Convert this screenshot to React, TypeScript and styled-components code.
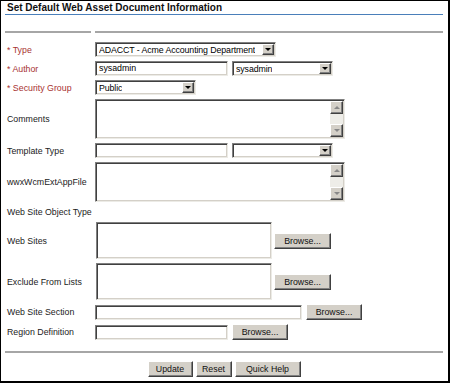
import React from "react";
import styled, { createGlobalStyle, css } from "styled-components";

const Global = createGlobalStyle`
  html, body { margin: 0; padding: 0; background: #fff; }
  body { font-family: "Liberation Sans", Arial, sans-serif; }
`;

const Frame = styled.div`
  box-sizing: border-box;
  width: 450px;
  height: 383px;
  border-top: 1px solid #000;
  border-left: 1px solid #000;
  border-right: 2px solid #000;
  border-bottom: 2px solid #000;
  padding: 0 5px 0 4px;
  display: flex;
  flex-direction: column;
  font-size: 8.8px;
  color: #000;
`;

const Title = styled.div`
  height: 13px;
  border-bottom: 1px solid #4a7fba;
  padding-left: 2px;
  font-weight: bold;
  font-size: 10px;
  line-height: 13px;
  color: #111;
`;

const HeadRule = styled.div`
  margin-top: 16px;
  display: grid;
  grid-template-columns: 86px 1fr;
  column-gap: 4px;
`;

const Rule = styled.div`
  height: 2px;
  background: #a6a6a6;
`;

const FormGrid = styled.div`
  margin-top: 9px;
  display: grid;
  grid-template-columns: 86px 1fr;
  column-gap: 4px;
  row-gap: 4px;
`;

const Label = styled.div<{ $req?: boolean }>`
  align-self: center;
  padding-left: 2px;
  white-space: nowrap;
  color: ${(p) => (p.$req ? "#a83232" : "#222")};
`;

const Cell = styled.div<{ $h?: number; $gap?: number }>`
  display: flex;
  align-items: center;
  gap: ${(p) => p.$gap ?? 4}px;
  min-height: ${(p) => p.$h ?? 12}px;
`;

const inset = css`
  box-sizing: border-box;
  background: #fff;
  border-top: 1px solid #808080;
  border-left: 1px solid #808080;
  border-right: 1px solid #ecebe6;
  border-bottom: 1px solid #ecebe6;
  box-shadow: inset 1px 1px 0 #404040, inset -1px -1px 0 #d4d0c8;
`;

const raised = css`
  box-sizing: border-box;
  background: #d4d0c8;
  border-top: 1px solid #fff;
  border-left: 1px solid #fff;
  border-right: 1px solid #404040;
  border-bottom: 1px solid #404040;
  box-shadow: inset -1px -1px 0 #808080;
`;

const TextBox = styled.div<{ $w: number; $ml?: number }>`
  ${inset};
  width: ${(p) => p.$w}px;
  height: 15px;
  margin-left: ${(p) => p.$ml ?? 0}px;
  padding: 0 3px;
  line-height: 13px;
  white-space: nowrap;
  overflow: hidden;
`;

const SelectBox = styled.div<{ $w: number }>`
  ${inset};
  width: ${(p) => p.$w}px;
  height: 15px;
  display: flex;
  align-items: center;
  justify-content: space-between;
  gap: 2px;
  padding: 0 1px 0 3px;
  white-space: nowrap;
`;

const SelectText = styled.span`
  overflow: hidden;
  letter-spacing: -0.1px;
`;

const ArrowBtn = styled.div`
  ${raised};
  width: 12px;
  height: 11px;
  display: flex;
  align-items: center;
  justify-content: center;
  flex-shrink: 0;
`;

const Tri = styled.div<{ $up?: boolean; $c?: string }>`
  width: 0;
  height: 0;
  border-left: 3px solid transparent;
  border-right: 3px solid transparent;
  ${(p) =>
    p.$up
      ? `border-bottom: 3px solid ${p.$c ?? "#000"};`
      : `border-top: 3px solid ${p.$c ?? "#000"};`}
`;

const Area = styled.div<{ $w: number; $h: number; $ml?: number }>`
  ${inset};
  width: ${(p) => p.$w}px;
  height: ${(p) => p.$h}px;
  margin-left: ${(p) => p.$ml ?? 0}px;
  display: flex;
  justify-content: flex-end;
  padding: 1px;
`;

const Scroll = styled.div`
  width: 13px;
  display: flex;
  flex-direction: column;
  background: #eeede8;
`;

const ScrollBtn = styled.div`
  ${raised};
  height: 13px;
  display: flex;
  align-items: center;
  justify-content: center;
`;

const Track = styled.div`
  flex: 1;
`;

const Button = styled.div<{ $w: number }>`
  ${raised};
  width: ${(p) => p.$w}px;
  height: 16px;
  display: flex;
  align-items: center;
  justify-content: center;
  font-size: 8.8px;
  color: #111;
`;

const Footer = styled.div`
  margin-top: 11px;
  display: flex;
  flex-direction: column;
`;

const ButtonBar = styled.div`
  margin-top: 8px;
  display: flex;
  justify-content: center;
  gap: 3px;
`;

const Select = ({ w, value }: { w: number; value?: string }) => (
  <SelectBox $w={w}>
    <SelectText>{value ?? ""}</SelectText>
    <ArrowBtn>
      <Tri />
    </ArrowBtn>
  </SelectBox>
);

const TextArea = ({ w, h }: { w: number; h: number }) => (
  <Area $w={w} $h={h}>
    <Scroll>
      <ScrollBtn>
        <Tri $up $c="#888" />
      </ScrollBtn>
      <Track />
      <ScrollBtn>
        <Tri $c="#888" />
      </ScrollBtn>
    </Scroll>
  </Area>
);

export default function App() {
  return (
    <>
      <Global />
      <Frame>
        <Title>Set Default Web Asset Document Information</Title>
        <HeadRule>
          <Rule />
          <Rule />
        </HeadRule>
        <FormGrid>
          <Label $req>* Type</Label>
          <Cell>
            <Select w={181} value="ADACCT - Acme Accounting Department" />
          </Cell>

          <Label $req>* Author</Label>
          <Cell>
            <TextBox $w={133}>sysadmin</TextBox>
            <Select w={101} value="sysadmin" />
          </Cell>

          <Label $req>* Security Group</Label>
          <Cell>
            <Select w={101} value="Public" />
          </Cell>

          <Label>Comments</Label>
          <Cell>
            <TextArea w={250} h={40} />
          </Cell>

          <Label>Template Type</Label>
          <Cell>
            <TextBox $w={133} />
            <Select w={101} />
          </Cell>

          <Label>wwxWcmExtAppFile</Label>
          <Cell>
            <TextArea w={250} h={40} />
          </Cell>

          <Label>Web Site Object Type</Label>
          <Cell $h={12} />

          <Label>Web Sites</Label>
          <Cell $gap={2}>
            <Area $w={176} $h={37} $ml={1} />
            <Button $w={57}>Browse...</Button>
          </Cell>

          <Label>Exclude From Lists</Label>
          <Cell $gap={2}>
            <Area $w={176} $h={37} $ml={1} />
            <Button $w={57}>Browse...</Button>
          </Cell>

          <Label>Web Site Section</Label>
          <Cell>
            <TextBox $w={207} />
            <Button $w={56}>Browse...</Button>
          </Cell>

          <Label>Region Definition</Label>
          <Cell>
            <TextBox $w={133} />
            <Button $w={56}>Browse...</Button>
          </Cell>
        </FormGrid>
        <Footer>
          <Rule />
        </Footer>
        <ButtonBar>
          <Button $w={45}>Update</Button>
          <Button $w={36}>Reset</Button>
          <Button $w={66}>Quick Help</Button>
        </ButtonBar>
      </Frame>
    </>
  );
}
